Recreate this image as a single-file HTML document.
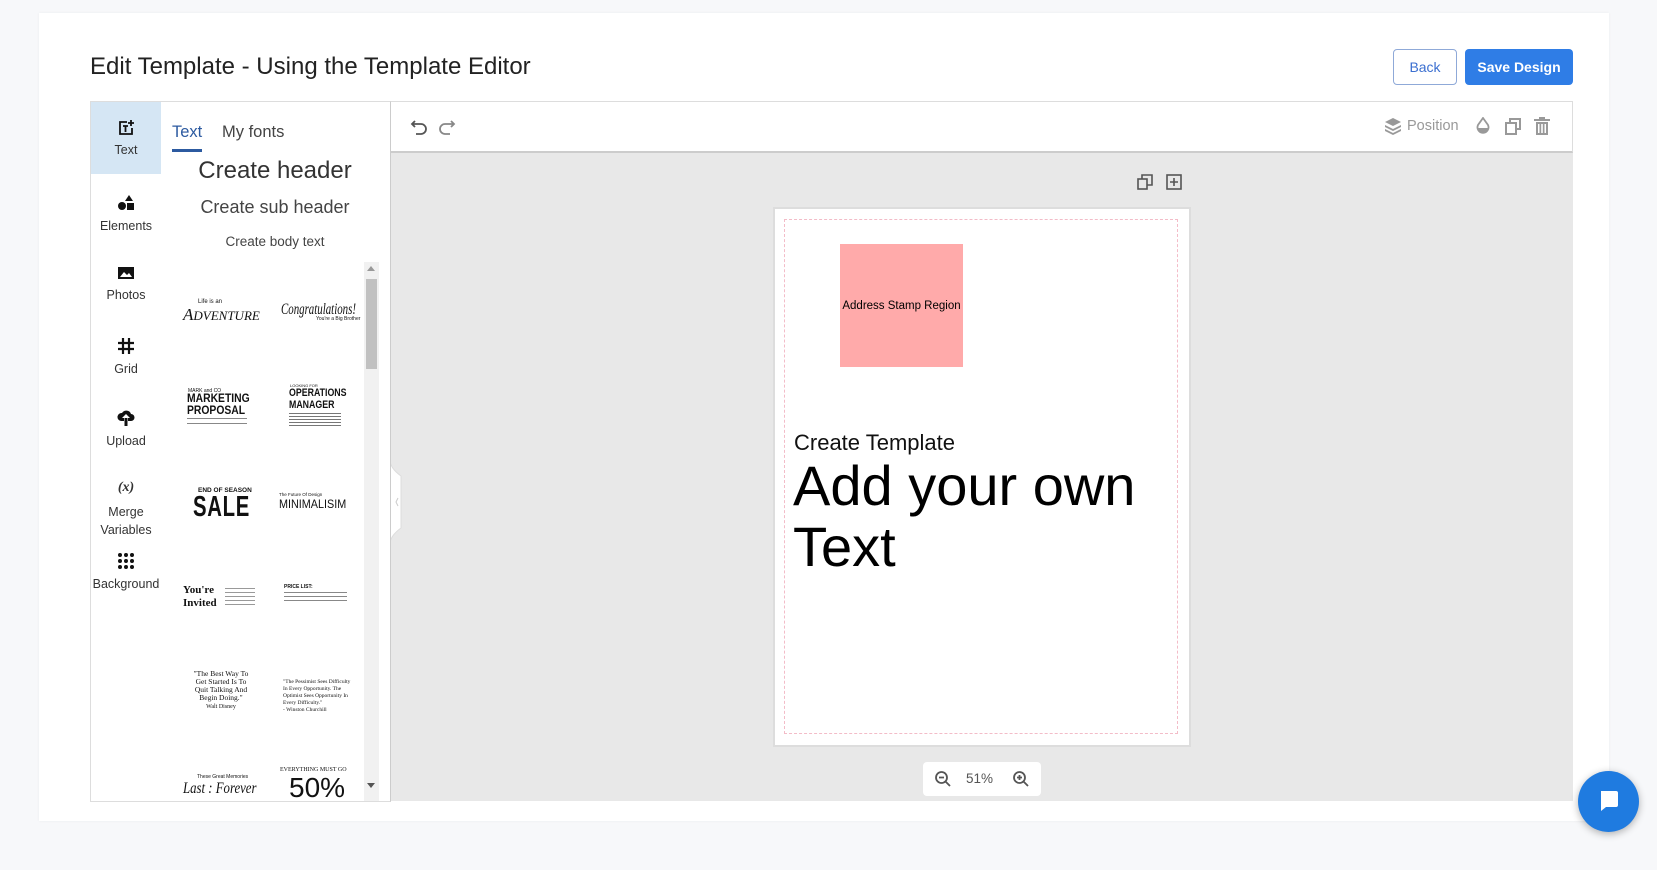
<!DOCTYPE html><html><head><meta charset="utf-8"><style>
*{box-sizing:border-box;margin:0;padding:0}
body{width:1657px;height:870px;background:#f7f8fa;font-family:"Liberation Sans",Arial,sans-serif;position:relative;overflow:hidden;color:#222}
.a{position:absolute}
.card{left:39px;top:13px;width:1570px;height:808px;background:#fff;box-shadow:0 0 3px rgba(0,0,0,.05)}
.btn{border-radius:4px;font-size:14px;display:flex;align-items:center;justify-content:center}
.side{left:90px;top:101px;width:72px;height:701px;border:1px solid #ddd;border-right:1px solid #ccc;background:#fff}
.si{position:absolute;left:0;width:70px;text-align:center;font-size:12.5px;color:#333}
.si svg{display:block;margin:0 auto 7px}
.panel{left:161px;top:101px;width:230px;height:701px;border-top:1px solid #ddd;border-bottom:1px solid #ddd;border-right:1px solid #ccc;background:#fff;overflow:hidden}
.t{position:absolute;white-space:nowrap;color:#111}
</style></head><body>
<div class="a card"></div>
<div class="a" style="left:90px;top:53px;font-size:24px;color:#222">Edit Template - Using the Template Editor</div>
<div class="a btn" style="left:1393px;top:49px;width:64px;height:36px;border:1px solid #8fa9d8;color:#3b6fd0;background:#fff">Back</div>
<div class="a btn" style="left:1465px;top:49px;width:108px;height:36px;background:#2f7de6;color:#fff;font-weight:bold;font-size:14px">Save Design</div>

<!-- toolbar -->
<div class="a" style="left:390px;top:101px;width:1183px;height:52px;border-top:1px solid #ddd;border-right:1px solid #ddd;border-bottom:2px solid #ccc;background:#fff"></div>
<svg class="a" style="left:410px;top:117px" width="48" height="20" viewBox="0 0 48 20" fill="none" stroke="#555" stroke-width="1.8"><path d="M5 4 L2 7 L5 10 M2 7 H11 a5 5 0 0 1 0 10 H6"/><path d="M41 4 L44 7 L41 10 M44 7 H35 a5 5 0 0 0 0 10 H40" stroke="#888"/></svg>
<svg class="a" style="left:1384px;top:117px" width="18" height="18" viewBox="0 0 18 18" fill="#999"><path d="M9 1 L17 5 L9 9 L1 5Z"/><path d="M1 8 L9 12 L17 8 V10 L9 14 L1 10Z"/><path d="M1 12 L9 16 L17 12 V14 L9 18 L1 14Z"/></svg>
<div class="a" style="left:1407px;top:118px;font-size:14.5px;color:#999">Position</div>
<svg class="a" style="left:1475px;top:117px" width="16" height="18" viewBox="0 0 16 18"><path d="M8 1 L13 8 a5.5 5.5 0 1 1 -10 0Z" fill="none" stroke="#999" stroke-width="1.8"/><path d="M2.8 11 h10.4 a5.2 5.2 0 0 1 -10.4 0Z" fill="#999"/></svg>
<svg class="a" style="left:1504px;top:117px" width="18" height="18" viewBox="0 0 18 18" fill="none" stroke="#999" stroke-width="2"><rect x="2" y="6" width="10" height="11"/><path d="M6 6 V2 H16 V12 H12"/></svg>
<svg class="a" style="left:1534px;top:117px" width="16" height="18" viewBox="0 0 16 18" fill="#999"><rect x="0" y="2" width="16" height="2"/><rect x="5" y="0" width="6" height="2"/><path d="M2 5 H14 V18 H2Z M4 7 V16 H5.5 V7Z M7.2 7 V16 H8.8 V7Z M10.5 7 V16 H12 V7Z" fill-rule="evenodd"/></svg>

<!-- canvas -->
<div class="a" style="left:390px;top:153px;width:1183px;height:648px;background:#e8e8e8"></div>
<svg class="a" style="left:1137px;top:174px" width="16" height="16" viewBox="0 0 16 16" fill="none" stroke="#555" stroke-width="1.6"><rect x="1" y="5" width="9" height="10"/><path d="M5 5 V1 H15 V11 H10"/></svg>
<svg class="a" style="left:1166px;top:174px" width="16" height="16" viewBox="0 0 16 16" fill="none" stroke="#555" stroke-width="1.6"><rect x="1" y="1" width="14" height="14"/><path d="M8 4 V12 M4 8 H12"/></svg>
<div class="a" style="left:773px;top:207px;width:418px;height:540px;background:#fff;border:2px solid #ddd"></div>
<div class="a" style="left:784px;top:219px;width:394px;height:515px;border:1.5px dashed #f3bcc8"></div>
<div class="a" style="left:840px;top:244px;width:123px;height:123px;background:#ffaaaa;font-size:11.5px;color:#000;display:flex;align-items:center;justify-content:center;white-space:nowrap">Address Stamp Region</div>
<div class="t" style="left:794px;top:430px;font-size:22px">Create Template</div>
<div class="t" style="left:793px;top:455px;font-size:56px;line-height:61px;color:#000">Add your own<br>Text</div>
<div class="a" style="left:923px;top:762px;width:118px;height:34px;background:#fff;border-radius:4px"></div>
<svg class="a" style="left:934px;top:770px" width="18" height="18" viewBox="0 0 18 18" fill="none" stroke="#555" stroke-width="1.8"><circle cx="7.5" cy="7.5" r="5.5"/><path d="M11.5 11.5 L16 16 M5 7.5 H10"/></svg>
<div class="a" style="left:966px;top:771px;font-size:13.5px;color:#555">51%</div>
<svg class="a" style="left:1012px;top:770px" width="18" height="18" viewBox="0 0 18 18" fill="none" stroke="#555" stroke-width="1.8"><circle cx="7.5" cy="7.5" r="5.5"/><path d="M11.5 11.5 L16 16 M5 7.5 H10 M7.5 5 V10"/></svg>
<svg class="a" style="left:389px;top:460px" width="16" height="84" viewBox="0 0 16 84"><path d="M1 0 Q1 8 12 16 V68 Q1 76 1 84Z" fill="#fff" stroke="#ddd"/><path d="M9 38 L7 42 L9 46" stroke="#ccc" fill="none"/></svg>

<!-- side -->
<div class="a side">
<div class="a" style="left:0;top:0;width:70px;height:72px;background:#d5e6f4"></div>
<div class="si" style="top:18px"><svg width="16" height="16" viewBox="0 0 16 16" fill="none" stroke="#111" stroke-width="1.8"><path d="M9 2 H2 V14 H14 V8"/><path d="M5 6 H10 M7.5 6 V12" /><path d="M13 0 V6 M10 3 H16"/></svg>Text</div>
<div class="si" style="top:92px"><svg width="18" height="18" viewBox="0 0 18 18" fill="#111"><path d="M12 1 L16 7 H8Z"/><circle cx="5" cy="12" r="4"/><rect x="10" y="9" width="7" height="7"/></svg>Elements</div>
<div class="si" style="top:163px"><svg width="18" height="16" viewBox="0 0 18 16"><rect x="1" y="2" width="16" height="12" fill="#111"/><path d="M3 12 L7 7 L10 10 L12 8 L15 12Z" fill="#fff"/></svg>Photos</div>
<div class="si" style="top:235px"><svg width="18" height="18" viewBox="0 0 18 18" stroke="#111" stroke-width="2.2"><path d="M6 1V17M12 1V17M1 6H17M1 12H17"/></svg>Grid</div>
<div class="si" style="top:307px"><svg width="18" height="18" viewBox="0 0 18 18" fill="#111"><path d="M4 12 a4 4 0 0 1 1-8 a5 5 0 0 1 9 1 a3.5 3.5 0 0 1 0 7 H11 V9 H13 L9 5 L5 9 H7 V12Z"/><rect x="7.5" y="9" width="3" height="8"/></svg>Upload</div>
<div class="si" style="top:378px"><div style="font-style:italic;font-family:'Liberation Serif',serif;font-weight:bold;font-size:14px;margin-bottom:9px">(x)</div>Merge<br><span style="line-height:22px">Variables</span></div>
<div class="si" style="top:450px"><svg width="18" height="18" viewBox="0 0 18 18" fill="#111"><circle cx="3" cy="3" r="2"/><circle cx="9" cy="3" r="2"/><circle cx="15" cy="3" r="2"/><circle cx="3" cy="9" r="2"/><circle cx="9" cy="9" r="2"/><circle cx="15" cy="9" r="2"/><circle cx="3" cy="15" r="2"/><circle cx="9" cy="15" r="2"/><circle cx="15" cy="15" r="2"/></svg>Background</div>
</div>

<!-- panel -->
<div class="a panel">
<div class="t" style="left:11px;top:21px;font-size:16.5px;color:#2c5aa0">Text</div>
<div class="a" style="left:11px;top:47px;width:30px;height:3px;background:#2c5aa0"></div>
<div class="t" style="left:61px;top:21px;font-size:16.5px;color:#444">My fonts</div>
<div class="t" style="left:0;width:228px;text-align:center;top:55px;font-size:24px;color:#333">Create header</div>
<div class="t" style="left:0;width:228px;text-align:center;top:95px;font-size:18px;color:#444">Create sub header</div>
<div class="t" style="left:0;width:228px;text-align:center;top:132px;font-size:13.5px;color:#444">Create body text</div>
<div class="a" style="left:203px;top:160px;width:15px;height:541px;background:#f1f1f1"></div>
<div class="a" style="left:205px;top:177px;width:11px;height:90px;background:#c1c1c1"></div>
<div class="a" style="left:206px;top:164px;border:4px solid transparent;border-bottom:5px solid #999;border-top:0"></div>
<div class="a" style="left:206px;top:681px;border:4px solid transparent;border-top:5px solid #555;border-bottom:0"></div>
<div class="t" style="left:37px;top:197px;font-size:6px">Life is an</div>
<div class="t" style="left:22px;top:203px;font-size:17px;font-style:italic;font-family:'Liberation Serif',serif">A<span style="font-size:13px">DVENTURE</span></div>
<div class="t" style="left:120px;top:199px;font-size:16px;font-style:italic;font-family:'Liberation Serif',serif;transform:scaleX(.68);transform-origin:left">Congratulations!</div>
<div class="t" style="left:155px;top:214px;font-size:5px">You're a Big Brother</div>
<div class="t" style="left:27px;top:286px;font-size:5px">MARK and CO</div>
<div class="t" style="left:26px;top:291px;font-size:11.5px;font-weight:bold;line-height:12px;transform:scaleX(.9);transform-origin:left">MARKETING<br>PROPOSAL</div>
<div class="a" style="left:26px;top:316px;width:60px;height:6px;border-top:1px solid #888;border-bottom:1px solid #888"></div>
<div class="t" style="left:129px;top:281px;font-size:4px">LOOKING FOR</div>
<div class="t" style="left:128px;top:285px;font-size:11px;font-weight:bold;line-height:12px;transform:scaleX(.8);transform-origin:left">OPERATIONS<br>MANAGER</div>
<div class="a" style="left:128px;top:311px;width:52px;height:14px;background:repeating-linear-gradient(#777 0 1px,#fff 1px 3px)"></div>
<div class="t" style="left:37px;top:385px;font-size:6.5px;font-weight:bold">END OF SEASON</div>
<div class="t" style="left:32px;top:389px;font-size:29px;font-weight:bold;transform:scaleX(.7);transform-origin:left;letter-spacing:1px">SALE</div>
<div class="t" style="left:118px;top:390px;font-size:4.5px">The Future Of Design</div>
<div class="t" style="left:118px;top:395px;font-size:12px;transform:scaleX(.9);transform-origin:left">MINIMALISIM</div>
<div class="t" style="left:22px;top:482px;font-size:11px;font-weight:bold;font-family:'Liberation Serif',serif;line-height:13px">You're<br>Invited</div>
<div class="a" style="left:64px;top:486px;width:30px;height:18px;background:repeating-linear-gradient(#999 0 1px,#fff 1px 4px)"></div>
<div class="t" style="left:123px;top:482px;font-size:5px;font-weight:bold">PRICE LIST:</div>
<div class="a" style="left:123px;top:490px;width:63px;height:12px;background:repeating-linear-gradient(#888 0 1px,#fff 1px 4px)"></div>
<div class="t" style="left:28px;top:568px;width:64px;white-space:normal;text-align:center;font-size:7.5px;line-height:8px;font-family:'Liberation Serif',serif">"The Best Way To Get Started Is To Quit Talking And Begin Doing."<br><span style="font-size:6px">Walt Disney</span></div>
<div class="t" style="left:122px;top:577px;width:70px;white-space:normal;font-size:5.5px;line-height:7px;font-family:'Liberation Serif',serif">"The Pessimist Sees Difficulty In Every Opportunity. The Optimist Sees Opportunity In Every Difficulty."<br>- Winston Churchill</div>
<div class="t" style="left:36px;top:672px;font-size:5px">These Great Memories</div>
<div class="t" style="left:22px;top:678px;font-size:16px;font-style:italic;font-family:'Liberation Serif',serif;transform:scaleX(.8);transform-origin:left">Last : Forever</div>
<div class="t" style="left:119px;top:665px;font-size:6px;font-family:'Liberation Serif',serif">EVERYTHING MUST GO</div>
<div class="t" style="left:128px;top:670px;font-size:28px">50%</div>
</div>

<div class="a" style="left:1578px;top:771px;width:61px;height:61px;border-radius:50%;background:#1f7be0;box-shadow:0 2px 8px rgba(0,0,0,.3)"></div>
<svg class="a" style="left:1598px;top:790px" width="21" height="22" viewBox="0 0 21 22"><path d="M3 1 H18 a2 2 0 0 1 2 2 V15 a2 2 0 0 1 -2 2 H8 L3 21Z" fill="#fff"/></svg>
</body></html>
